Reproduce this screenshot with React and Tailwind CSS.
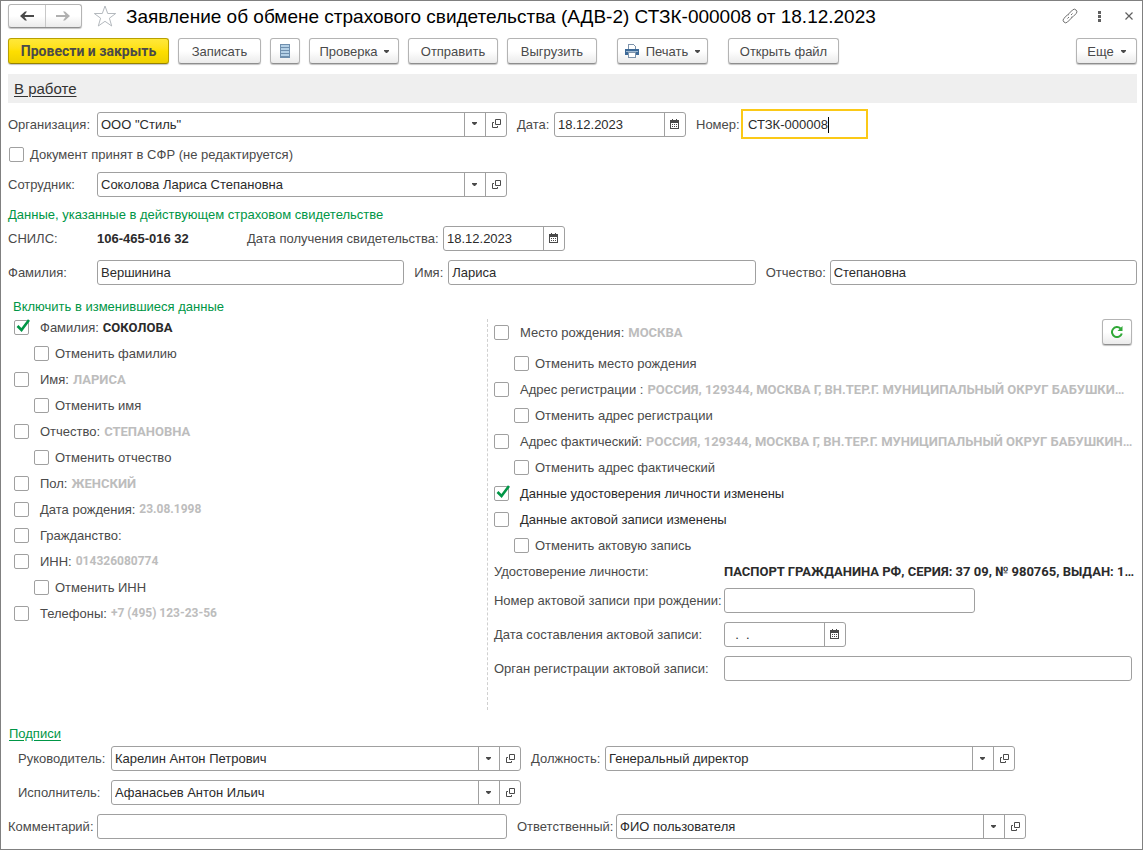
import React, { useState } from 'react';

const BUTTON =
  'h-[26px] shrink-0 flex items-center justify-center rounded-[3px] border border-[#b4b4b4] border-b-[#8e8e8e] bg-linear-to-b from-white from-50% to-[#ebebeb] text-[#4a4a4a] shadow-[0_1px_1px_#c4c4c4]';
const FIELD = 'h-[25px] flex overflow-hidden rounded-[3px] border border-[#a0a0a0] bg-white text-[#2b2b2b]';
const CELL = 'w-[21px] shrink-0 flex items-center justify-center border-l border-[#a0a0a0] pb-px';

const leftRows = [
  { id: 'surname', label: 'Фамилия:', value: 'СОКОЛОВА' },
  { id: 'surname-off', label: 'Отменить фамилию', nested: true },
  { id: 'name', label: 'Имя:', value: 'ЛАРИСА' },
  { id: 'name-off', label: 'Отменить имя', nested: true },
  { id: 'patronymic', label: 'Отчество:', value: 'СТЕПАНОВНА' },
  { id: 'patronymic-off', label: 'Отменить отчество', nested: true },
  { id: 'sex', label: 'Пол:', value: 'ЖЕНСКИЙ' },
  { id: 'birth', label: 'Дата рождения:', value: '23.08.1998', digits: true },
  { id: 'citizenship', label: 'Гражданство:' },
  { id: 'inn', label: 'ИНН:', value: '014326080774', digits: true },
  { id: 'inn-off', label: 'Отменить ИНН', nested: true },
  { id: 'phones', label: 'Телефоны:', value: '+7 (495) 123-23-56', digits: true },
];

const rightRows = [
  { id: 'place-off', label: 'Отменить место рождения', nested: true },
  { id: 'reg', label: 'Адрес регистрации :', value: 'РОССИЯ, 129344, МОСКВА Г, ВН.ТЕР.Г. МУНИЦИПАЛЬНЫЙ ОКРУГ БАБУШКИ…' },
  { id: 'reg-off', label: 'Отменить адрес регистрации', nested: true },
  { id: 'fact', label: 'Адрес фактический:', value: 'РОССИЯ, 129344, МОСКВА Г, ВН.ТЕР.Г. МУНИЦИПАЛЬНЫЙ ОКРУГ БАБУШКИН…' },
  { id: 'fact-off', label: 'Отменить адрес фактический', nested: true },
  { id: 'identity', label: 'Данные удостоверения личности изменены', dark: true },
  { id: 'act', label: 'Данные актовой записи изменены', dark: true },
  { id: 'act-off', label: 'Отменить актовую запись', nested: true },
];

const Caret = () => (
  <svg width="5" height="3" viewBox="0 0 5 3" className="shrink-0">
    <path d="M0 0h5v1L3 3H2L0 1z" fill="#4a4a4a" />
  </svg>
);

const OpenIcon = () => (
  <svg width="9" height="9" viewBox="0 0 9 9" fill="none" stroke="#4a4a4a">
    <path d="M3.5 .5h5v5h-5zM2 3.5H.5v5h5V7" />
  </svg>
);

const CalendarIcon = () => (
  <svg width="9" height="10" viewBox="0 0 9 10" shapeRendering="crispEdges">
    <path d="M0 1h9v9H0z" fill="#4a4a4a" />
    <path d="M1 4h7v5H1zM2 0h1v1H2zM6 0h1v1H6z" fill="#fff" />
    <path d="M2 0h1v1H2zM6 0h1v1H6zM2 5h1v1H2zM4 5h1v1H4zM6 5h1v1H6zM2 7h1v1H2zM4 7h1v1H4zM6 7h1v1H6z" fill="#4a4a4a" />
  </svg>
);

const Checkbox = ({ id, checked, onChange }) => (
  <span className="relative shrink-0 size-[15px]">
    <input
      id={id}
      type="checkbox"
      checked={checked}
      onChange={onChange}
      className="block size-[15px] appearance-none rounded-[2px] border border-[#a0a0a0] bg-white"
    />
    {checked && (
      <svg width="15" height="15" viewBox="0 0 15 15" className="absolute -top-px left-px pointer-events-none">
        <path d="M2.5 7l4 4L14 1" fill="none" stroke="#009646" strokeWidth="2.6" />
      </svg>
    )}
  </span>
);

const CheckRow = ({ row, checked, onToggle }) => (
  <div className={row.nested ? 'h-[26px] flex items-center pl-5' : 'h-[26px] flex items-center min-w-0'}>
    <Checkbox id={row.id} checked={checked} onChange={() => onToggle(row.id)} />
    <label
      htmlFor={row.id}
      className={
        row.nested
          ? 'ml-[6px] whitespace-nowrap'
          : row.dark
            ? 'ml-[11px] whitespace-nowrap text-[#2b2b2b]'
            : 'ml-[11px] whitespace-nowrap'
      }
    >
      {row.label}
    </label>
    {row.value && (
      <span
        className={`ml-1 font-['Roboto',sans-serif] font-bold whitespace-nowrap ${
          checked ? 'text-[#2b2b2b]' : 'text-[#bdbdbd]'
        } ${row.digits ? 'text-[12px]' : 'text-[13px]'}`}
      >
        {row.value}
      </span>
    )}
  </div>
);

const ComboField = ({ id, value }) => (
  <div className={`${FIELD} w-[410px]`}>
    <div className="relative flex-1">
      <select id={id} defaultValue={value} className="size-full appearance-none pl-[3px] outline-none">
        <option>{value}</option>
      </select>
      <span className="absolute inset-y-0 right-0 w-[21px] flex items-center justify-center border-l border-[#a0a0a0] pr-px pb-px pointer-events-none">
        <Caret />
      </span>
    </div>
    <button type="button" aria-label="Открыть" className={CELL}>
      <OpenIcon />
    </button>
  </div>
);

const DateField = ({ id, value, className }) => (
  <div className={`${FIELD} ${className}`}>
    <input id={id} defaultValue={value} className="min-w-0 flex-1 pl-[3px] outline-none" />
    <button type="button" aria-label="Календарь" className={`${CELL} pr-px`}>
      <CalendarIcon />
    </button>
  </div>
);

const TextField = ({ id, value, className }) => (
  <input id={id} defaultValue={value} className={`${FIELD} min-w-0 pl-[3px] outline-none ${className}`} />
);

export default function App() {
  const [checks, setChecks] = useState({ surname: true, identity: true });
  const toggle = (id) => setChecks((prev) => ({ ...prev, [id]: !prev[id] }));

  return (
    <div className="border border-[#808080] bg-white pt-[3px] pr-[5px] pb-[10px] pl-[7px] font-['Liberation_Sans',sans-serif] text-[13px] leading-[15px] text-[#4a4a4a]">
      <header className="h-6 flex items-center">
        <div className="h-6 w-[74px] shrink-0 flex rounded-[3px] border border-[#b4b4b4] border-b-[#8e8e8e] bg-linear-to-b from-white from-50% to-[#ebebeb] shadow-[0_1px_1px_#c4c4c4]">
          <button type="button" aria-label="Назад" className="flex-1 flex items-center justify-center">
            <svg width="14" height="10" viewBox="0 0 14 10">
              <path d="M0 5L5 .5h2L4.500 4H14v2H4.500L7 9.500H5z" fill="#4a4a4a" />
            </svg>
          </button>
          <button type="button" aria-label="Вперед" className="flex-1 flex items-center justify-center border-l border-[#c8c8c8]">
            <svg width="14" height="10" viewBox="0 0 14 10">
              <path d="M14 5L9 .5H7L9.500 4H0v2h9.500L7 9.500h2z" fill="#b0b0b0" />
            </svg>
          </button>
        </div>
        <button type="button" aria-label="В избранное" className="ml-[11px] shrink-0">
          <svg width="24" height="22" viewBox="0 0 24 22" fill="none" stroke="#b4b9be">
            <path d="M12 1l2.700 7.500h8l-6.300 4.700 2.300 7.800L12 16.300 5.300 21l2.300-7.800L1.300 8.500h8z" />
          </svg>
        </button>
        <h1 className="ml-[9px] flex-1 truncate pt-px text-[19px] leading-6 text-black">
          Заявление об обмене страхового свидетельства (АДВ-2) СТЗК-000008 от 18.12.2023
        </h1>
        <div className="flex items-center text-[#606060]">
          <button type="button" aria-label="Получить ссылку">
            <svg width="16" height="16" viewBox="0 0 16 16" fill="none" stroke="#707070">
              <path d="M6.500 6l4-4a2.500 2.500 0 0 1 3.600 3.600L11 8.700a2 2 0 0 1-2 .6M9.500 10l-4 4a2.500 2.500 0 0 1-3.600-3.600L5 7.300a2 2 0 0 1 2-.6M5.500 10.500l1.500-1.500M9 7l1.500-1.500" />
            </svg>
          </button>
          <button type="button" aria-label="Меню" className="ml-5">
            <svg width="3" height="11" viewBox="0 0 3 11" fill="#606060">
              <path d="M0 0h3v3H0zM0 4h3v3H0zM0 8h3v3H0z" />
            </svg>
          </button>
          <button type="button" aria-label="Закрыть" className="ml-6 mr-1">
            <svg width="8" height="8" viewBox="0 0 8 8" stroke="#606060" strokeWidth="1.200">
              <path d="M.5 .5l7 7M7.500 .5l-7 7" />
            </svg>
          </button>
        </div>
      </header>

      <div className="mt-[10px] flex gap-[9px]">
        <button
          type="button"
          className="h-[26px] w-[161px] shrink-0 rounded-[3px] border border-[#b8a000] border-b-[#968200] bg-linear-to-b from-[#ffe838] via-[#fedf00] to-[#eed000] font-['Roboto',sans-serif] text-[14px] font-bold text-[#4a4a4a] shadow-[0_1px_1px_#c4c4c4]"
        >
          Провести и закрыть
        </button>
        <button type="button" className={`${BUTTON} w-[83px]`}>Записать</button>
        <button type="button" aria-label="Журнал" className={`${BUTTON} w-[30px]`}>
          <svg width="10" height="14" viewBox="0 0 10 14" shapeRendering="crispEdges">
            <path d="M0 0h10v14H0z" fill="#6f8fae" />
            <path d="M1 1h8v2H1zM1 4h8v2H1zM1 7h8v2H1zM1 10h8v2H1z" fill="#b4d0e6" />
          </svg>
        </button>
        <button type="button" aria-haspopup="menu" className={`${BUTTON} w-[90px] gap-[6px]`}>
          Проверка <Caret />
        </button>
        <button type="button" className={`${BUTTON} w-[90px]`}>Отправить</button>
        <button type="button" className={`${BUTTON} w-[90px]`}>Выгрузить</button>
        <button type="button" aria-haspopup="menu" className={`${BUTTON} ml-[11px] w-[91px] gap-[7px]`}>
          <svg width="14" height="14" viewBox="0 0 14 14" shapeRendering="crispEdges">
            <path d="M3.500 5V.5h5l2 2V5" fill="#fff" stroke="#7d93ab" />
            <path d="M0 5h14v6H0z" fill="#3d6a98" />
            <path d="M1 7h12v1H1z" fill="#9fbad3" />
            <path d="M3.500 8.500h7v5h-7z" fill="#fff" stroke="#7d93ab" />
          </svg>
          Печать <Caret />
        </button>
        <button type="button" className={`${BUTTON} ml-[11px] w-[111px]`}>Открыть файл</button>
        <button type="button" aria-haspopup="menu" className={`${BUTTON} ml-auto w-[61px] gap-[7px]`}>
          Еще <Caret />
        </button>
      </div>

      <div className="mt-[10px] h-[29px] flex items-center bg-[#efefef] pl-[6px]">
        <a href="#status" className="text-[15px] leading-5 underline underline-offset-2 text-[#333]">В работе</a>
      </div>

      <div className="mt-[6px] h-[30px] flex items-center">
        <label htmlFor="org" className="w-[89px]">Организация:</label>
        <ComboField id="org" value={'ООО "Стиль"'} />
        <label htmlFor="date" className="ml-[10px] w-[37px]">Дата:</label>
        <DateField id="date" value="18.12.2023" className="w-[132px]" />
        <label htmlFor="number" className="ml-[10px] w-[45px]">Номер:</label>
        <div className="relative">
          <input
            id="number"
            defaultValue="СТЗК-000008"
            className="block h-[30px] w-[127px] border-2 border-[#fbc917] bg-white pl-[5px] text-[#2b2b2b] outline-none"
          />
          <span className="absolute top-2 left-[87px] h-4 w-px bg-black" />
        </div>
      </div>

      <div className="mt-2 ml-px flex items-center">
        <Checkbox id="accepted" checked={!!checks.accepted} onChange={() => toggle('accepted')} />
        <label htmlFor="accepted" className="ml-[6px]">Документ принят в СФР (не редактируется)</label>
      </div>

      <div className="mt-[10px] flex items-center">
        <label htmlFor="employee" className="w-[89px]">Сотрудник:</label>
        <ComboField id="employee" value="Соколова Лариса Степановна" />
      </div>

      <h2 className="mt-[10px] text-[#009646]">Данные, указанные в действующем страховом свидетельстве</h2>

      <div className="mt-1 flex items-center">
        <span className="w-[89px]">СНИЛС:</span>
        <span className="w-[150px] font-bold text-[#2b2b2b]">106-465-016 32</span>
        <label htmlFor="received" className="w-[196px]">Дата получения свидетельства:</label>
        <DateField id="received" value="18.12.2023" className="w-[122px]" />
      </div>

      <div className="mt-[9px] flex items-center">
        <label htmlFor="last" className="w-[89px]">Фамилия:</label>
        <TextField id="last" value="Вершинина" className="flex-1" />
        <label htmlFor="first" className="ml-[10px] w-[34px]">Имя:</label>
        <TextField id="first" value="Лариса" className="flex-1" />
        <label htmlFor="middle" className="ml-[10px] w-[64px]">Отчество:</label>
        <TextField id="middle" value="Степановна" className="flex-1" />
      </div>

      <h2 className="mt-[15px] ml-[5px] leading-[14px] text-[#009646]">Включить в изменившиеся данные</h2>

      <div className="grid grid-cols-[42fr_57fr]">
        <div className="pl-[6px]">
          {leftRows.map((row) => (
            <CheckRow key={row.id} row={row} checked={!!checks[row.id]} onToggle={toggle} />
          ))}
        </div>
        <div className="mt-[5px] min-w-0 border-l border-dashed border-[#d0d0d0] pr-[5px] pb-[29px] pl-[6px]">
          <div className="mb-[5px] flex items-center justify-between">
            <CheckRow
              row={{ id: 'place', label: 'Место рождения:', value: 'МОСКВА' }}
              checked={!!checks.place}
              onToggle={toggle}
            />
            <button type="button" aria-label="Обновить" className={`${BUTTON} w-[30px]`}>
              <svg width="12" height="12" viewBox="0 0 12 12">
                <path d="M10.800 7.500A5 5 0 1 1 9.500 2.500" fill="none" stroke="#2fa836" strokeWidth="2" />
                <path d="M11.500 0v5h-5z" fill="#2fa836" />
              </svg>
            </button>
          </div>
          {rightRows.map((row) => (
            <CheckRow key={row.id} row={row} checked={!!checks[row.id]} onToggle={toggle} />
          ))}
          <div className="h-[26px] flex items-center">
            <span className="w-[230px] shrink-0">Удостоверение личности:</span>
            <span className="whitespace-nowrap font-['Roboto',sans-serif] font-bold text-[#2b2b2b]">
              ПАСПОРТ ГРАЖДАНИНА РФ, СЕРИЯ: 37 09, № 980765, ВЫДАН: 1…
            </span>
          </div>
          <div className="mt-1 flex flex-col gap-[9px]">
            <div className="flex items-center">
              <label htmlFor="act-number" className="w-[230px] shrink-0 whitespace-nowrap">Номер актовой записи при рождении:</label>
              <TextField id="act-number" value="" className="w-[251px]" />
            </div>
            <div className="flex items-center">
              <label htmlFor="act-date" className="w-[230px] shrink-0 whitespace-nowrap">Дата составления актовой записи:</label>
              <DateField id="act-date" value="  .  ." className="w-[122px]" />
            </div>
            <div className="flex items-center">
              <label htmlFor="act-office" className="w-[230px] shrink-0 whitespace-nowrap">Орган регистрации актовой записи:</label>
              <TextField id="act-office" value="" className="flex-1" />
            </div>
          </div>
        </div>
      </div>

      <div className="mt-4 ml-px">
        <a href="#signatures" className="underline underline-offset-2 text-[#009646]">Подписи</a>
      </div>

      <div className="mt-[5px] flex flex-col gap-[9px]">
        <div className="flex items-center pl-[10px]">
          <label htmlFor="head" className="w-[93px]">Руководитель:</label>
          <ComboField id="head" value="Карелин Антон Петрович" />
          <label htmlFor="post" className="ml-[10px] w-[74px]">Должность:</label>
          <ComboField id="post" value="Генеральный директор" />
        </div>
        <div className="flex items-center pl-[10px]">
          <label htmlFor="executor" className="w-[93px]">Исполнитель:</label>
          <ComboField id="executor" value="Афанасьев Антон Ильич" />
        </div>
        <div className="flex items-center">
          <label htmlFor="comment" className="w-[89px]">Комментарий:</label>
          <TextField id="comment" value="" className="w-[410px]" />
          <label htmlFor="responsible" className="ml-[10px] w-[99px]">Ответственный:</label>
          <ComboField id="responsible" value="ФИО пользователя" />
        </div>
      </div>
    </div>
  );
}
